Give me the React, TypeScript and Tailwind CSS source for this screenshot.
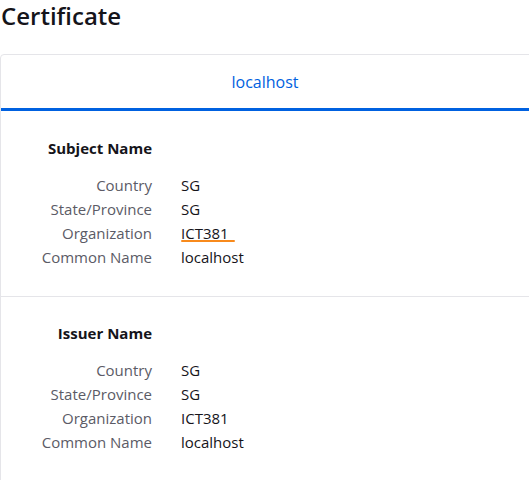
import React from 'react';

type Field = { label: string; value: string; mark?: boolean };

const subject: Field[] = [
  { label: 'Country', value: 'SG' },
  { label: 'State/Province', value: 'SG' },
  { label: 'Organization', value: 'ICT381', mark: true },
  { label: 'Common Name', value: 'localhost' },
];

const issuer: Field[] = [
  { label: 'Country', value: 'SG' },
  { label: 'State/Province', value: 'SG' },
  { label: 'Organization', value: 'ICT381' },
  { label: 'Common Name', value: 'localhost' },
];

const Section = ({ title, fields, last }: { title: string; fields: Field[]; last?: boolean }) => (
  <div className={last ? 'pt-[24px] pb-[27px]' : 'pt-[25px] pb-[27px] border-b border-[#e5e5e9]'}>
    <div className="grid grid-cols-[151px_1fr] gap-x-[29px]">
      <div className="text-right font-bold text-[15px] leading-[24px] text-[#15141a] mb-[13px]">{title}</div>
      <div />
      {fields.map((f) => (
        <React.Fragment key={f.label}>
          <div className="text-right text-[15px] leading-[24px] text-[#5b5b66]">{f.label}</div>
          <div className="text-[15px] leading-[24px] text-[#15141a]">
            <span className="relative inline-block">
              {f.value}
              {f.mark && (
                <span className="absolute left-0 right-[-6px] bottom-[3px] h-[2px] rounded-full bg-[#f88a1c]" />
              )}
            </span>
          </div>
        </React.Fragment>
      ))}
    </div>
  </div>
);

export default function App() {
  return (
    <div className="min-h-screen bg-white overflow-hidden" style={{ fontFamily: '"Open Sans", "Noto Sans", sans-serif' }}>
      <h1 className="text-[24px] leading-[32px] font-semibold text-[#15141a] pl-[1px]">Certificate</h1>
      <div className="mt-[22px] w-[560px] border border-[#e5e5e9] rounded-tl-[4px]">
        <div className="h-[56px] border-b-[3px] border-[#0061e0] flex items-center justify-center pr-[30px]">
          <span className="text-[16px] text-[#0061e0]">localhost</span>
        </div>
        <Section title="Subject Name" fields={subject} />
        <Section title="Issuer Name" fields={issuer} last />
      </div>
    </div>
  );
}
